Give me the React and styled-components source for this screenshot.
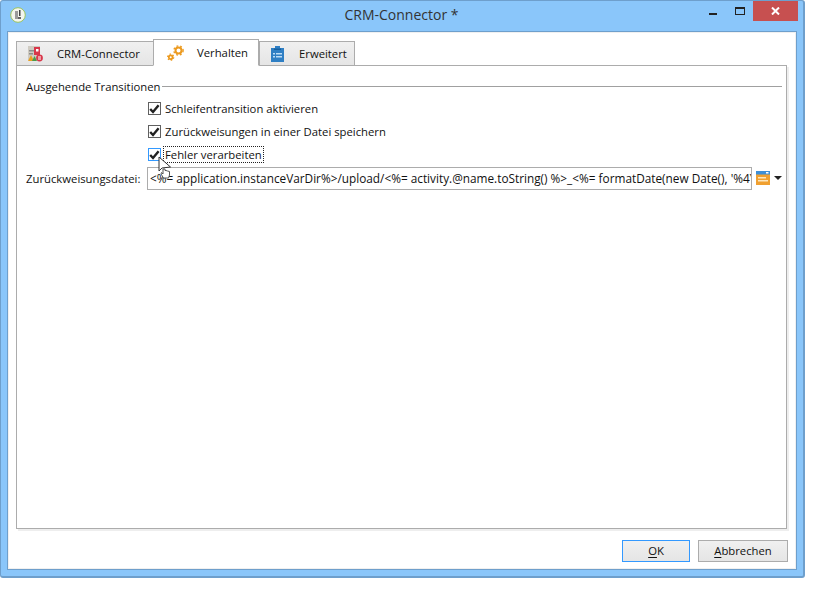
import React from 'react';
import styled, { createGlobalStyle } from 'styled-components';

const GlobalStyle = createGlobalStyle`
   html, body {
      margin: 0;
      padding: 0;
      background: #fff;
   }
   body {
      font-family: "Open Sans", "Liberation Sans", sans-serif;
      font-size: 11.3px;
      color: #111;
   }
`;

const AppIcon = () => (
   <svg width="16" height="16" viewBox="0 0 16 16">
      <circle cx="8" cy="8" r="7.3" fill="#f4f6ee" stroke="#9cc45c" strokeWidth="1" />
      <rect x="5" y="4" width="3" height="8" fill="#9a9a9a" />
      <rect x="9" y="3" width="1.5" height="6" fill="#444" />
      <rect x="8" y="10" width="3" height="2" fill="#666" />
   </svg>
);

const ConnectorIcon = () => (
   <svg width="15" height="16" viewBox="0 0 15 16">
      <rect x="0" y="0" width="12" height="14" fill="#cfcbc2" />
      <rect x="1" y="4" width="5" height="1.5" fill="#8c8c8c" />
      <rect x="1" y="7" width="4" height="1.5" fill="#8c8c8c" />
      <rect x="6" y="1" width="6" height="8" fill="#d8364a" />
      <rect x="8" y="3" width="2.5" height="2.5" fill="#fff" />
      <path d="M0 15 L3 9 L6 15 Z" fill="#e8a020" />
      <path d="M4 15 L6.5 10 L9 15 Z" fill="#4a9a4a" />
      <circle cx="11.5" cy="12" r="3.4" fill="#d8364a" />
      <path d="M10 11 H13 M10 13 H13" stroke="#fff" strokeWidth="1.1" />
   </svg>
);

const GearsIcon = () => (
   <svg width="17" height="16" viewBox="0 0 17 16">
      <g fill="none" stroke="#ec9a1e">
         <circle cx="11.5" cy="5.5" r="3" strokeWidth="2" />
         <circle cx="11.5" cy="5.5" r="4.6" strokeWidth="1.4" strokeDasharray="1.8 2.01" />
         <circle cx="3.7" cy="12.2" r="1.9" strokeWidth="1.8" />
         <circle cx="3.7" cy="12.2" r="3.1" strokeWidth="1.1" strokeDasharray="1.5 1.75" />
      </g>
   </svg>
);

const ClipboardIcon = () => (
   <svg width="13" height="16" viewBox="0 0 13 16">
      <rect x="0" y="2" width="13" height="14" fill="#2f7fc4" />
      <rect x="4" y="0" width="5" height="4" fill="#2f7fc4" />
      <rect x="3" y="2.5" width="7" height="1.5" fill="#17609f" />
      <rect x="2" y="7" width="2" height="1.5" fill="#bcdcf5" />
      <rect x="5" y="7" width="6" height="1.5" fill="#bcdcf5" />
      <rect x="2" y="10" width="2" height="1.5" fill="#bcdcf5" />
      <rect x="5" y="10" width="6" height="1.5" fill="#bcdcf5" />
   </svg>
);

const FileFieldIcon = () => (
   <svg width="14" height="14" viewBox="0 0 14 14">
      <rect x="0" y="0" width="14" height="14" fill="#f0a030" />
      <rect x="0" y="0" width="14" height="3.5" fill="#3d8fd8" />
      <rect x="10" y="1" width="2.5" height="1.5" fill="#fff" />
      <rect x="2" y="6" width="8" height="1.5" fill="#fde6bc" />
      <rect x="2" y="9" width="10" height="1.5" fill="#fde6bc" />
   </svg>
);

const CheckMark = () => (
   <svg width="11" height="10" viewBox="0 0 11 10">
      <path d="M1.2 5 L4 8 L9.6 1.2" fill="none" stroke="#222" strokeWidth="2.4" />
   </svg>
);

const HandCursor = () => (
   <svg width="14" height="23" viewBox="0 0 14 23">
      <path
         d="M1 1 V15 L4 12 L12.5 11 Z"
         fill="#fff"
         stroke="#333"
         strokeWidth="1"
      />
      <path
         d="M5 13 V18 L3.5 16.5 L3 18 L5.5 22 H10.5 L11.5 19 V15.5 L9.5 15 L8 14.5 L7 14.5 V13 Z"
         fill="#fff"
         stroke="#555"
         strokeWidth="1"
      />
   </svg>
);

const tabs = [
   { label: 'CRM-Connector', icon: <ConnectorIcon />, width: 138, pad: 11, gap: 14 },
   { label: 'Verhalten', icon: <GearsIcon />, width: 106, pad: 13, gap: 13, active: true },
   { label: 'Erweitert', icon: <ClipboardIcon />, width: 96, pad: 11, gap: 15 },
];

const options = [
   { label: 'Schleifentransition aktivieren' },
   { label: 'Zurückweisungen in einer Datei speichern' },
   { label: 'Fehler verarbeiten', focused: true },
];

const App = () => {
   return (
      <>
         <GlobalStyle />
         <Window>
            <TitleBar>
               <AppIcon />
               <Title>CRM-Connector *</Title>
               <WindowControls>
                  <MinButton />
                  <MaxButton />
                  <CloseButton>
                     <svg width="9" height="8" viewBox="0 0 9 8">
                        <path d="M1 0.5 L8 7.5 M8 0.5 L1 7.5" stroke="#fff" strokeWidth="2" />
                     </svg>
                  </CloseButton>
               </WindowControls>
            </TitleBar>

            <Client>
               <TabStrip>
                  {tabs.map((tab) => (
                     <Tab
                        key={tab.label}
                        $active={tab.active}
                        $width={tab.width}
                        $pad={tab.pad}
                        $gap={tab.gap}
                     >
                        <TabIcon>{tab.icon}</TabIcon>
                        {tab.label}
                     </Tab>
                  ))}
               </TabStrip>

               <Panel>
                  <GroupHeading>
                     <span>Ausgehende Transitionen</span>
                     <GroupLine />
                  </GroupHeading>

                  <OptionList>
                     {options.map((option) => (
                        <Option key={option.label}>
                           <CheckBox $focused={option.focused}>
                              <CheckMark />
                           </CheckBox>
                           <OptionLabel $focused={option.focused}>{option.label}</OptionLabel>
                        </Option>
                     ))}
                  </OptionList>

                  <FieldRow>
                     <FieldLabel>Zurückweisungsdatei:</FieldLabel>
                     <TextField>
                        {"<%= application.instanceVarDir%>/upload/<%= activity.@name.toString() %>_<%= formatDate(new Date(), '%4Y%2M%2D') %>.txt"}
                     </TextField>
                     <FileFieldIcon />
                     <DropArrow />
                  </FieldRow>
               </Panel>

               <Footer>
                  <DialogButton $primary>
                     <u>O</u>K
                  </DialogButton>
                  <DialogButton>
                     <u>A</u>bbrechen
                  </DialogButton>
               </Footer>
            </Client>

            <Pointer>
               <HandCursor />
            </Pointer>
         </Window>
      </>
   );
};

const Window = styled.div`
   position: relative;
   box-sizing: border-box;
   display: flex;
   flex-direction: column;
   width: 805px;
   height: 578px;
   background: #8ac6fa;
   border: 1px solid #6e9fcc;
   border-width: 1px 2px 2px 1px;
   border-radius: 3px;
`;

const TitleBar = styled.div`
   display: flex;
   align-items: flex-start;
   flex: none;
   height: 30px;
   padding: 6px 0 0 9px;
   box-sizing: border-box;
`;

const Title = styled.div`
   position: absolute;
   left: 0;
   right: 1px;
   top: 4px;
   text-align: center;
   font-size: 14px;
   line-height: 20px;
   color: #333;
`;

const WindowControls = styled.div`
   display: flex;
   align-items: flex-start;
   margin-left: auto;
   margin-top: -6px;
   margin-right: 5px;
`;

const MinButton = styled.div`
   width: 8px;
   height: 2px;
   margin: 12px 18px 0 0;
   background: #222;
`;

const MaxButton = styled.div`
   box-sizing: border-box;
   width: 10px;
   height: 8px;
   margin: 6px 8px 0 0;
   border: 1px solid #222;
   border-top-width: 2px;
`;

const CloseButton = styled.div`
   display: flex;
   align-items: center;
   justify-content: center;
   width: 45px;
   height: 20px;
   background: #c75050;
`;

const Client = styled.div`
   flex: 1;
   display: flex;
   flex-direction: column;
   margin: 0 6px 6px 6px;
   padding: 8px 9px 0 8px;
   background: #fff;
   border: 1px solid #6e9fcc;
   box-shadow: inset 0 0 0 1px #f0f0f0;
   min-height: 0;
`;

const TabStrip = styled.div`
   display: flex;
   align-items: flex-end;
   flex: none;
   height: 26px;
   margin-bottom: -1px;
   position: relative;
   z-index: 1;
`;

const Tab = styled.div`
   display: flex;
   align-items: center;
   flex: none;
   box-sizing: border-box;
   width: ${(p) => p.$width}px;
   height: ${(p) => (p.$active ? 27 : 25)}px;
   padding-left: ${(p) => p.$pad}px;
   gap: ${(p) => p.$gap}px;
   margin-left: ${(p) => (p.$active ? -1 : 0)}px;
   border: 1px solid #acacac;
   border-bottom: ${(p) => (p.$active ? '1px solid #fff' : '1px solid #acacac')};
   background: ${(p) => (p.$active ? '#fff' : 'linear-gradient(#f0f0f0, #e5e5e5)')};
`;

const TabIcon = styled.span`
   display: flex;
   align-items: center;
   justify-content: center;
   flex: none;
`;

const Panel = styled.div`
   flex: 1;
   box-sizing: border-box;
   min-height: 0;
   padding: 11px 4px 0 9px;
   border: 1px solid #acacac;
   box-shadow: 2px 2px 0 #eee;
`;

const GroupHeading = styled.div`
   display: flex;
   align-items: center;
   height: 18px;
   gap: 2px;
`;

const GroupLine = styled.div`
   flex: 1;
   height: 1px;
   background: #a0a0a0;
`;

const OptionList = styled.div`
   display: flex;
   flex-direction: column;
   gap: 8px;
   padding: 6px 0 0 122px;
`;

const Option = styled.div`
   display: flex;
   align-items: center;
   height: 15px;
   gap: 2px;
`;

const CheckBox = styled.div`
   display: flex;
   align-items: center;
   justify-content: center;
   box-sizing: border-box;
   flex: none;
   width: 13px;
   height: 13px;
   background: #fff;
   border: 1px solid ${(p) => (p.$focused ? '#3399ff' : '#606060')};
`;

const OptionLabel = styled.span`
   padding: 0 1px;
   border: 1px dotted ${(p) => (p.$focused ? '#222' : 'transparent')};
`;

const FieldRow = styled.div`
   display: flex;
   align-items: center;
   height: 24px;
   margin-top: 4px;
`;

const FieldLabel = styled.div`
   flex: none;
   width: 121px;
`;

const TextField = styled.div`
   box-sizing: border-box;
   flex: none;
   width: 605px;
   height: 23px;
   line-height: 21px;
   padding-left: 2px;
   font-size: 11.8px;
   overflow: hidden;
   white-space: nowrap;
   border: 1px solid #acacac;
   margin-right: 4px;
`;

const DropArrow = styled.div`
   width: 0;
   height: 0;
   margin-left: 4px;
   border-left: 4px solid transparent;
   border-right: 4px solid transparent;
   border-top: 4px solid #222;
`;

const Footer = styled.div`
   display: flex;
   justify-content: flex-end;
   align-items: flex-start;
   flex: none;
   height: 40px;
   margin-right: -1px;
   padding-top: 11px;
   box-sizing: border-box;
   gap: 8px;
`;

const DialogButton = styled.div`
   display: flex;
   align-items: center;
   justify-content: center;
   box-sizing: border-box;
   width: ${(p) => (p.$primary ? 68 : 90)}px;
   height: 22px;
   padding-bottom: 1px;
   background: linear-gradient(#f0f0f0, #e5e5e5);
   border: 1px solid ${(p) => (p.$primary ? '#3399ff' : '#acacac')};

   u {
      text-underline-offset: 2px;
      white-space: pre;
   }
`;

const Pointer = styled.div`
   position: absolute;
   left: 157px;
   top: 155px;
   line-height: 0;
`;

export default App;
